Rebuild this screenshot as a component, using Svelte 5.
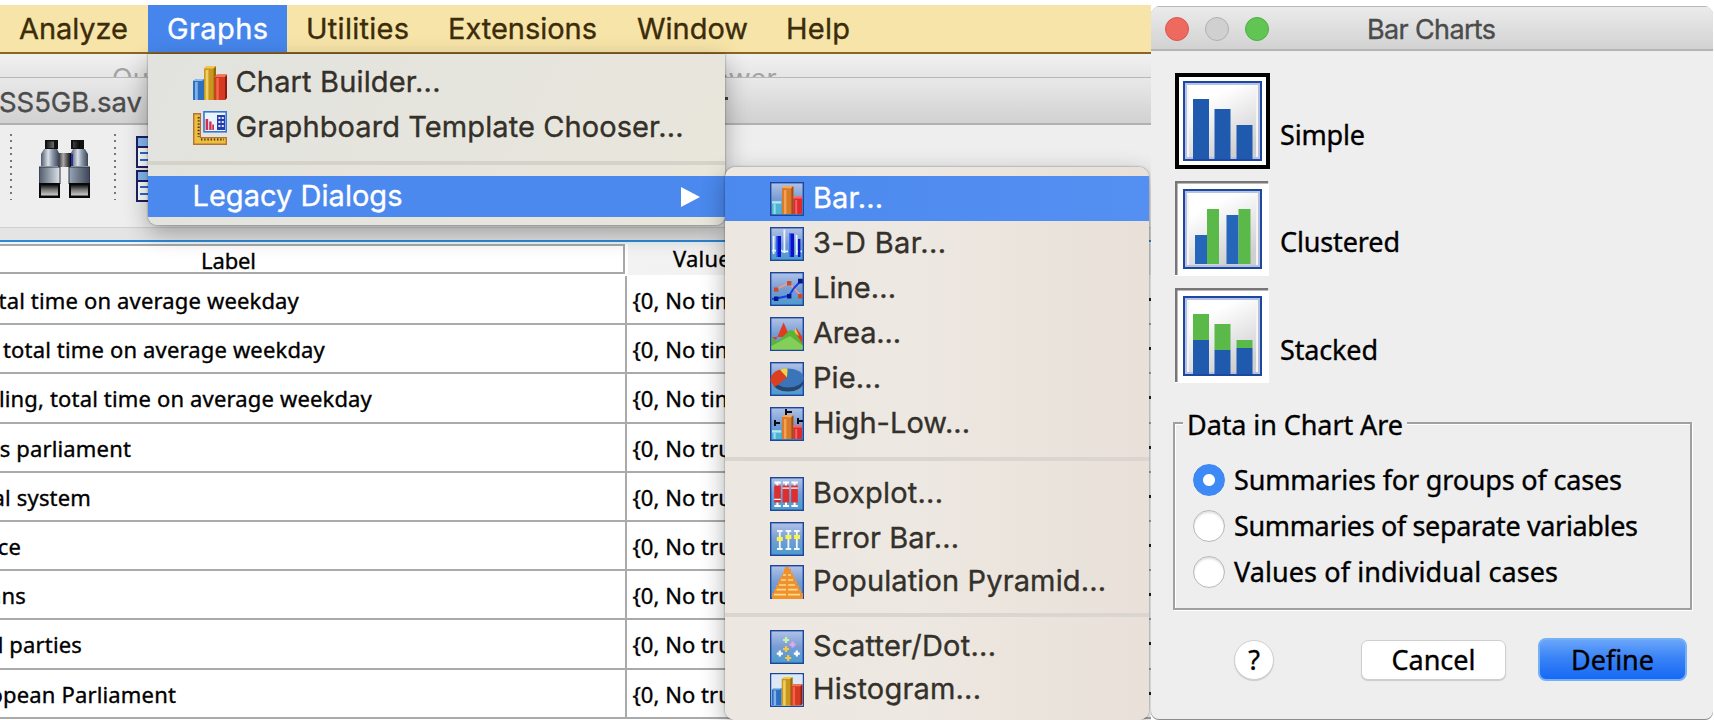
<script>
  const fit = (node, width) => {
    const natural = node.getBoundingClientRect().width;
    const gaps = node.textContent.length - 1;
    node.style.letterSpacing = `${(width - natural) / gaps}px`;
  };

  const menus = [
    { name: 'Analyze', w: 109, slot: 148 },
    { name: 'Graphs', w: 101, slot: 139, active: true },
    { name: 'Utilities', w: 103, slot: 142 },
    { name: 'Extensions', w: 149, slot: 189 },
    { name: 'Window', w: 111, slot: 149 },
    { name: 'Help', w: 64, slot: 102 },
  ];

  const groups = [
    [
      { id: 'bar', name: 'Bar...', w: 70, h: 45, on: true },
      { id: 'bar3d', name: '3-D Bar...', w: 133, h: 45 },
      { id: 'line', name: 'Line...', w: 83, h: 45 },
      { id: 'area', name: 'Area...', w: 88, h: 45 },
      { id: 'pie', name: 'Pie...', w: 68, h: 45 },
      { id: 'highlow', name: 'High-Low...', w: 157, h: 45 },
    ],
    [
      { id: 'box', name: 'Boxplot...', w: 130, h: 45 },
      { id: 'error', name: 'Error Bar...', w: 146, h: 45 },
      { id: 'pyramid', name: 'Population Pyramid...', w: 293, h: 42 },
    ],
    [
      { id: 'scatter', name: 'Scatter/Dot...', w: 183, h: 42 },
      { id: 'hist', name: 'Histogram...', w: 168, h: 43 },
    ],
  ];

  const rows = [
    { text: 'tal time on average weekday', end: 299, value: '{0, No tim' },
    { text: 'total time on average weekday', end: 325, value: '{0, No tim' },
    { text: 'ling, total time on average weekday', end: 372, value: '{0, No tim' },
    { text: "'s parliament", end: 131, value: '{0, No tru' },
    { text: 'al system', end: 91, value: '{0, No tru' },
    { text: 'ce', end: 21, value: '{0, No tru' },
    { text: 'ans', end: 26, value: '{0, No tru' },
    { text: 'l parties', end: 82, value: '{0, No tru' },
    { text: 'opean Parliament', end: 176, value: '{0, No tru' },
  ];

  const B = '#1f5aae';
  const G = '#5ab948';
  const charts = [
    { name: 'Simple', w: 85, bars: [[18, 26, 16, 60, B], [39.5, 36, 16, 50, B], [61.5, 52, 16, 34, B]] },
    { name: 'Clustered', w: 120, bars: [[20, 54, 12, 29, '#2565ba'], [32, 28, 12, 55, G], [51.5, 34, 12, 49, '#2565ba'], [63.5, 28, 12, 55, G]] },
    { name: 'Stacked', w: 98, bars: [[18, 26, 16, 26, G], [18, 52, 16, 34, B], [39.5, 36, 16, 26, G], [39.5, 62, 16, 24, B], [61.5, 52, 16, 8, G], [61.5, 60, 16, 26, B]] },
  ];

  const options = [
    { name: 'Summaries for groups of cases', w: 388 },
    { name: 'Summaries of separate variables', w: 404 },
    { name: 'Values of individual cases', w: 324 },
  ];

  let chart = $state(0);
  let option = $state(0);
</script>

{#snippet bars3d(y)}
  <path d="M1 {y + 8}h4.600v{8 - y}H1z" fill="#4fb4d4" /><path d="M1 {y + 7.600}h4.600v1.200H1z" fill="#b4e8f2" /><path d="M1.800 {y + 9}h1v{7 - y}h-1z" fill="#9bdcec" />
  <path d="M6 {y + 1}h5.600V16H6z" fill="#d9792a" /><path d="M6 {y + 1}l1-1h5l-.6 1.200z" fill="#f3a95a" /><path d="M7 {y + 2}h1.200V16H7z" fill="#f2a350" /><path d="M10.700 {y + 1}l1-1V16h-1z" fill="#a04e12" />
  <path d="M11.700 {y + 6}H16V16h-4.300z" fill="#dc2a2e" /><path d="M11.700 {y + 5}H16v1.300h-4.300z" fill="#f4696a" /><path d="M12.600 {y + 7}h1V16h-1z" fill="#f36363" />
{/snippet}

{#snippet goldBars()}
  <path d="M0 7.500 1.500 6.500h4V17H0z" fill="#2f6fbf" /><path d="M1 8h1.400v9H1z" fill="#7fb2e8" /><path d="M0 7.500 1.500 6.500h4l-1 1z" fill="#8fbdeb" />
  <path d="M5.500 1.200 7 0h4.500v17h-6z" fill="#c9971f" /><path d="M5.500 1.200 7 0h4.500l-1.200 1.200z" fill="#f0c94c" /><path d="M6.300 2h1.400v15H6.300z" fill="#f0cf62" /><path d="M10.300 1.200 11.500.3V17h-1.200z" fill="#93690b" />
  <path d="M10.800 5.500 12 4.300h5V16l-1 1h-5.200z" fill="#d63a22" /><path d="M10.800 5.500 12 4.300h5l-1 1.200z" fill="#f37558" /><path d="M11.600 6h1.300v11h-1.300z" fill="#f26747" /><path d="M16 5.500 17 4.500V16l-1 1z" fill="#8d1b12" />
{/snippet}

{#snippet icon(id)}
  <svg class="icon" viewBox="0 0 17 17">
    <defs>
      <linearGradient id="sky" x1="0" y1="0" x2="0" y2="1">
        <stop offset="0" stop-color="#b1c3e7" /><stop offset=".5" stop-color="#779dd3" /><stop offset="1" stop-color="#4a9bce" />
      </linearGradient>
    </defs>
    {#if id === 'builder'}
      {@render goldBars()}
    {:else if id === 'board'}
      <path d="M0 1h4v12h13v4H0z" fill="#b5713a" /><path d="M.7 1.800h2.700v11.800h12.900v2.600H.7z" fill="#edbf3f" />
      <path d="M2.800 3v10M4 14.300h11.500" stroke="#4b3510" stroke-width="1" stroke-dasharray=".7 .9" />
      <rect x="5.500" y=".4" width="11.100" height="10" fill="#eaf4ff" stroke="#3577cf" stroke-width=".8" />
      <path d="M6.300 4h1.300v5.500H6.300zM8.100 5.300h1.200v4.200H8.100zM9.600 6.800h.9v2.700h-.9z" fill="#cc3151" />
      <path d="M12 2h4v7.500h-4z" fill="#263cae" /><path d="M12.700 3h1v1h-1zm1.700 0h1v1h-1zm-1.700 2h1v1h-1zm1.700 0h1v1h-1zm-1.700 2h1v1h-1zm1.700 0h1v1h-1z" fill="#dce8ff" />
    {:else}
      <rect x=".35" y=".35" width="16.300" height="16.300" fill="url(#sky)" stroke="#1d459c" stroke-width=".7" />
      {#if id === 'bar'}
        {@render bars3d(2)}
      {:else if id === 'bar3d'}
        <path d="M1.800 4.500v9M7.200 1.300V13M13.300 4v10M1 11.800h5M6 12.200h3M13 12.200h3" stroke="#eaf3ff" stroke-width=".9" />
        <path d="M3 4.500h2.500V15H3zM9.500 3.200H12V15H9.500zM14 6h1.200v9H14z" fill="#0a12c8" /><path d="M3 4.500h.8V15H3zM9.500 3.200h.8V15h-.8z" fill="#3968f4" />
      {:else if id === 'line'}
        <path d="m3 8.700 6.500-3.200 6 6.500" stroke="#ef9a8b" stroke-width=".9" fill="none" /><path d="m1 13.500 2-.3 6.500-1.300L12 8l3.500-3.700" stroke="#173de4" stroke-width="1" fill="none" />
        <path d="M2 7.700h2.200v2.200H2zM8.500 4.500h2.200v2.200H8.500zM14 11h2.300v2.200H14z" fill="#c94c30" /><path d="M2 12.300h2.200v2.200H2zM8.500 11h2.200v2.200H8.500zM14 3.400h2.400v2.400H14z" fill="#07168b" />
      {:else if id === 'area'}
        <path d="m1 10 2 1.500L6.800 2.700 10 10H3z" fill="#df3d21" /><path d="m12.200 9 1-3.500 3 4.500v4.500z" fill="#df3d21" /><path d="m12 8 .8-2.500 1.700 4z" fill="#f2c348" />
        <path d="m.7 10 2.600 2.400 2-1.400L10 6.500l2 .5 4.300 6.500v2.800H.7z" fill="#5ab536" /><path d="m.7 14.500 9.300-5 6.300 4.700v2.100H.7z" fill="#84cf5a" />
      {:else if id === 'pie'}
        <ellipse cx="9" cy="10.200" rx="7.600" ry="4.600" fill="#27456f" /><ellipse cx="9.200" cy="8" rx="7.600" ry="4.800" fill="#3b74b8" />
        <path d="M8.500 7.800 5 3.700C2 4.500 0 7 .2 9.500l2.300 3z" fill="#dc3e20" /><path d="M8.500 7.800 5 3.900q2-.8 3.800-.7z" fill="#f4d242" />
      {:else if id === 'highlow'}
        {@render bars3d(4)}
        <path d="M2.500 6.500v3m0-1.500H5M8 1v3m0-1.500h3M14 5.500v3m0-1.500h2.500" stroke="#0b0b14" stroke-width="1" />
      {:else if id === 'box'}
        <path d="M3.700 2.500v12.300M8 2.500v12.300M12.300 2.500v12.300M2.200 2.700h3.200M6.500 2.700h3M10.700 2.700h3.200M2.200 14.500h3.200M6.500 14.500h3M10.700 14.500h3.200" stroke="#fff" stroke-width="1" />
        <path d="M2.100 4.200h3.300v8.600H2.100zM6.300 4.200h3.300v8.600H6.300zM10.600 4.200h3.300v8.600h-3.300z" fill="#dd2f31" /><path d="M2.100 11.200h3.300M6.300 5.600h3.300M10.600 5.600h3.300" stroke="#fff" stroke-width=".6" />
      {:else if id === 'error'}
        <path d="M4.900 4.500v9M9.200 4.500v9M13.400 4.500v9M3.500 4.500h2.800M7.800 4.500h2.800M12 4.500h2.800M3.500 13.500h2.800M7.800 13.500h2.800M12 13.500h2.800" stroke="#f2f7ff" stroke-width=".9" />
        <path d="M3.400 7.500h3v2h-3zM7.700 6.500h3v2h-3zM12 6.500h3v2h-3z" fill="#f8f34a" />
      {:else if id === 'pyramid'}
        <path d="M7.500 1h2v1h1v2h1v2h1v2h1v2h1v2h1v2h1v3H1v-3h1v-2h1v-2h1V8h1V6h1V4h1V2h.5z" fill="#ef922d" />
        <path d="M6.500 5H8m1 0h1.500M5.500 7.500H8m1 0h2.500M4.500 10H8m1 0h3.500M3.300 12.300H8m1 0h4.800M2 14.800h6m1 0h6" stroke="#ffd98c" stroke-width=".8" />
      {:else if id === 'scatter'}
        <g stroke-width="1.100"><path d="M8 3.500v3M6.500 5h3" stroke="#c9f5a0" /><path d="M11.300 5.800v3M9.800 7.300h3" stroke="#e9a6ec" /><path d="M8 8v3M6.500 9.500h3M9.100 12.500v3M7.600 14h3" stroke="#fac645" /><path d="M4.900 10.300v3M3.400 11.800h3M13.400 10.300v3M11.900 11.800h3" stroke="#fff" /></g>
      {:else}
        <rect x=".7" y=".7" width="15.600" height="15.600" fill="#dce8f6" /><g transform="translate(.9 2) scale(.9 .84)">{@render goldBars()}</g>
      {/if}
    {/if}
  </svg>
{/snippet}

<div class="screen">
  <div class="desktop">
    <nav class="menubar">
      {#each menus as m}
        <div class="menu" class:active={m.active} style:width="{m.slot}px"><span use:fit={m.w}>{m.name}</span></div>
      {/each}
    </nav>

    <div class="back-title"><span class="ou">Ou</span><span class="ewer">ewer</span></div>
    <div class="title"><span use:fit={143}>SS5GB.sav</span><i></i></div>
    <div class="toolbar">
      <i class="dots"></i>
      <svg class="bino" viewBox="0 0 51 58">
        <defs>
          <linearGradient id="steel"><stop offset="0" stop-color="#4f5b6b" /><stop offset=".4" stop-color="#d9e1e9" /><stop offset=".65" stop-color="#8996a8" /><stop offset="1" stop-color="#3b4453" /></linearGradient>
          <linearGradient id="cap"><stop offset="0" stop-color="#222" /><stop offset=".4" stop-color="#aaa" /><stop offset="1" stop-color="#050505" /></linearGradient>
          <linearGradient id="foot" x1="0" y1="0" x2="0" y2="1"><stop offset="0" stop-color="#111" /><stop offset=".45" stop-color="#777" /><stop offset="1" stop-color="#ccc" /></linearGradient>
        </defs>
        <path d="M19 13h13v14H19z" fill="url(#cap)" />
        <path d="M6 0h13v9H6zM32 0h13v9H32z" fill="#111" /><path d="M8 1.500h7V8H8zM34 1.500h7V8h-7z" fill="url(#cap)" />
        <path d="M5 9h13l2 4v13H2V14z" fill="url(#steel)" /><path d="M34 9h12l3 5v12H32V13z" fill="url(#steel)" />
        <path d="M0 27h21v17H0zM30 27h21v17H30z" fill="url(#steel)" stroke="#2c3340" />
        <path d="M32 14h2v12h-2z" fill="#2a2fa0" />
        <path d="M0 43h21v15H0zM30 43h21v15H30z" fill="#080808" /><path d="M2 45h17v10.500H2zM32 45h17v10.500H32z" fill="url(#foot)" />
      </svg>
      <i class="dots"></i>
      <svg class="list" viewBox="0 0 24 66">
        <g stroke="#1d2161" stroke-width="2"><path d="M1 1h22v30H1zM1 35h22v30H1z" fill="#fff" /><path d="M1 1h22v10H1zM1 35h22v10H1z" fill="#86baf3" /></g>
        <path d="M4 17h20M4 24h20M4 51h20M4 58h20" stroke="#2b6bd0" stroke-width="2" />
      </svg>
    </div>
    <div class="strip"></div>

    <div class="head"><div class="label"><span use:fit={55}>Label</span></div><div class="value">Value</div></div>
    <div class="rows">
      {#each rows as r}
        <div class="row">
          <div class="label"><span style:width="{r.end}px">{r.text}</span></div>
          <div class="value">{r.value}</div>
          <i></i>
        </div>
      {/each}
    </div>

    <div class="panel graphs">
      <div class="item"><span class="pic">{@render icon('builder')}</span><span class="name" use:fit={205}>Chart Builder...</span></div>
      <div class="item"><span class="pic">{@render icon('board')}</span><span class="name" use:fit={448}>Graphboard Template Chooser...</span></div>
      <hr />
      <div class="item on legacy"><span class="name" use:fit={210}>Legacy Dialogs</span><svg viewBox="0 0 19 20"><path d="M0 0v20l19-10z" fill="#fff" /></svg></div>
    </div>

    <div class="panel sub">
      {#each groups as g, i}
        {#if i}<hr />{/if}
        {#each g as it}
          <div class="item" class:on={it.on} style:height="{it.h}px"><span class="pic">{@render icon(it.id)}</span><span class="name" use:fit={it.w}>{it.name}</span></div>
        {/each}
      {/each}
    </div>
  </div>

  <section class="dialog">
    <header><b class="red"></b><b></b><b class="green"></b><span use:fit={129}>Bar Charts</span></header>
    <div class="charts">
      {#each charts as c, i}
        <button class="chart" onclick={() => (chart = i)}>
          <svg viewBox="0 0 95 96">
            <defs><linearGradient id="paper" x1="0" y1="0" x2=".5" y2="1"><stop offset=".3" stop-color="#fff" /><stop offset="1" stop-color="#cfcfd2" /></linearGradient></defs>
            {#if chart === i}
              <path d="M0 0h95v96H0z" /><path d="M4 4h87v88H4z" fill="#fff" />
            {:else}
              <path d="M0 0h94v95H0z" fill="#fff" /><path d="M1.250 94V1.250h92" fill="none" stroke="#777" stroke-width="2.500" />
            {/if}
            <path d="M9 9h77v78H9z" fill="url(#paper)" stroke="#1d48a2" stroke-width="2" />
            <path d="M11 11h73v74H11z" fill="none" stroke="#b5c2e2" stroke-width="2" /><path d="M13 14v70M82 14v70" stroke="#f8f4f0" stroke-width="2" />
            {#each c.bars as [x, y, w, h, fill]}<rect {x} {y} width={w} height={h} {fill} />{/each}
          </svg>
          <span use:fit={c.w}>{c.name}</span>
        </button>
      {/each}
    </div>
    <div class="group">
      <div class="legend"><span use:fit={216}>Data in Chart Are</span></div>
      {#each options as o, i}
        <button class="option" onclick={() => (option = i)}><i class:picked={option === i}></i><span use:fit={o.w}>{o.name}</span></button>
      {/each}
    </div>
    <footer>
      <button class="help">?</button>
      <button class="cancel"><span use:fit={84}>Cancel</span></button>
      <button class="define"><span use:fit={83}>Define</span></button>
    </footer>
  </section>
</div>

<style>
  :global(body) { background: #fff; overflow: hidden; }
  * { box-sizing: border-box; }
  button { border: 0; padding: 0; background: none; font: inherit; color: inherit; }
  span { white-space: pre; }
  svg { display: block; flex: none; }
  .screen { display: flex; width: 1714px; height: 720px; padding-top: 5px; overflow: hidden; background: #fff; font-family: Inter, "Liberation Sans", sans-serif; -webkit-text-stroke: .35px currentColor; }
  .desktop { position: relative; width: 1151px; height: 715px; display: flex; flex-direction: column; overflow: hidden; flex: none; }

  .menubar { display: flex; height: 49px; flex: none; background: #f6e4a8; border-bottom: 2px solid #8b6524; font-size: 29px; line-height: 47px; color: #3c2c0a; }
  .menu { padding-left: 19px; flex: none; }
  .menu.active { background: #4686ec; color: #fff; }

  .back-title { display: flex; height: 23px; flex: none; background: linear-gradient(#f1f1f1, #e5e5e5); overflow: hidden; color: #a3a3a3; font-size: 27px; line-height: 33px; padding: 8px 0 0 112px; -webkit-text-stroke: 0; }
  .ou { width: 35px; }
  .ewer { margin-left: 566px; letter-spacing: .3px; }
  .title { display: flex; align-items: center; height: 48px; flex: none; background: linear-gradient(#e9e9e9, #d1d1d1); border-top: 1px solid #b8b8b8; border-bottom: 2px solid #b1b1b1; color: #4c4c4c; font-size: 27.500px; line-height: 45px; }
  .title span { padding-top: 3px; margin-left: -1px; }
  .title i { width: 6px; height: 3px; background: #444; margin: -4px 0 0 580px; }
  .toolbar { display: flex; align-items: flex-start; height: 103px; flex: none; background: #eee; border-bottom: 1px solid #cfcfcf; padding: 9px 0 0 10px; }
  .dots { width: 2px; height: 66px; background: repeating-linear-gradient(#777 0 2px, transparent 2px 6.500px); }
  .bino { width: 51px; height: 58px; margin: 6px 24px 0 27px; }
  .list { width: 24px; height: 66px; margin: 2px 0 0 20px; }
  .strip { height: 16px; flex: none; background: linear-gradient(#e4e4e4 12.500px, #2f8ad6 12.500px 14.500px, #eef4f8 14.500px); }

  .head, .rows { font-family: "Noto Sans", "Open Sans", sans-serif; font-size: 22px; color: #000; }
  .head { display: flex; height: 32px; flex: none; background: #fff; }
  .head .label { width: 625px; height: 30px; border: 2px solid #a8a8a8; border-left: 0; padding-left: 201px; line-height: 28px; }
  .head .value { flex: 1; height: 31px; margin-left: 3px; background: linear-gradient(90deg, #f3f3f3, #ececec); line-height: 28px; padding-left: 45px; letter-spacing: .2px; }
  .rows { background: #fff; }
  .row { display: flex; height: 49.200px; border-bottom: 2px solid #aaa; line-height: 49px; }
  .row .label { width: 628px; border-right: 2px solid #aaa; overflow: hidden; letter-spacing: .16px; }
  .row .label span { display: flex; justify-content: flex-end; }
  .row .value { width: 521px; padding-left: 5px; letter-spacing: .05px; }
  .row i { align-self: center; width: 3px; height: 3px; background: #222; }

  .panel { position: absolute; font-size: 29px; color: #34302a; box-shadow: 0 8px 24px rgba(0, 0, 0, .32), 0 0 2px rgba(0, 0, 0, .5); overflow: hidden; }
  .panel hr { border: 0; margin: 0; height: 4px; background: #dad5cf; flex: none; }
  .item { display: flex; align-items: center; line-height: 42px; }
  .item.on { background: linear-gradient(90deg, #4c89ee, #5490f2); color: #fff; }
  .name { padding-bottom: 2px; }
  .icon { width: 34px; height: 34px; }
  .pic { width: 43px; flex: none; }
  .graphs { left: 148px; top: 49px; width: 577px; height: 171px; border-radius: 0 0 9px 9px; background: linear-gradient(120deg, #e2e3df, #e9e6db); padding-top: 6px; z-index: 1; }
  .graphs .item { height: 45px; padding-left: 44.500px; }
  .graphs hr { margin: 11px 0 11px; background: #d5d2c9; }
  .graphs .legacy { height: 41px; line-height: 39px; background: #4b89ee; }
  .legacy svg { width: 19px; height: 20px; margin-left: 278px; }
  .sub { left: 725px; top: 162px; width: 424px; height: 553px; border-radius: 10px; background: linear-gradient(90deg, #ece7e1, #ede8e1 45%, #e8e0d9); padding-top: 9px; z-index: 2; }
  .sub .item { padding-left: 45px; }
  .sub hr { margin: 11px 0 10px; }
  .sub hr:nth-of-type(2) { margin: 10px 0 9px; }

  .dialog { position: relative; z-index: 3; width: 562px; height: 714px; margin-top: 1px; border-radius: 9px 9px 8px 8px; background: #eee; display: flex; flex-direction: column; box-shadow: inset 0 1px #b9b9b9, inset 0 -1px #8c8c8c; overflow: hidden; font-family: "Noto Sans", "Open Sans", sans-serif; font-size: 27px; color: #000; }
  header { display: flex; align-items: center; height: 45px; flex: none; padding-left: 14px; gap: 16px; background: linear-gradient(#ebebeb, #d2d2d2); border-top: 1px solid #b9b9b9; border-bottom: 2px solid #b5b5b5; font: 27px/42px Inter, sans-serif; color: #4b4b4b; }
  header b { width: 24px; height: 24px; border-radius: 50%; background: #d0d0d0; border: 1px solid #b0b0b0; margin-top: 2px; }
  header .red { background: #ee6a5f; border-color: #d9574d; }
  header .green { background: #61c554; border-color: #4fae43; }
  header span { margin-left: 82px; margin-top: 3px; }
  .charts { display: flex; flex-direction: column; gap: 11.500px; padding: 22px 0 0 24px; }
  .chart { display: flex; align-items: center; height: 96px; text-align: left; }
  .chart svg { width: 95px; height: 96px; }
  .chart span { margin: 26px 0 0 10px; line-height: 37px; }
  .group { position: relative; width: 519px; height: 188px; margin: 38px 0 0 22px; border: 2px solid #a0a0a0; box-shadow: inset 1px 1px #fff, 1px 1px #fff; padding-top: 33px; display: flex; flex-direction: column; }
  .legend { position: absolute; left: 8px; top: -18px; height: 38px; line-height: 38px; width: 224px; padding-left: 4px; background: #eee; }
  .option { display: flex; align-items: center; height: 46px; padding-left: 18px; text-align: left; }
  .option span { margin-top: -1px; }
  .option i { width: 32px; height: 32px; border-radius: 50%; background: #fff; border: 1px solid #b8b8b8; box-shadow: inset 0 2px 2px rgba(0, 0, 0, .12); margin-right: 9px; }
  .option i.picked { background: radial-gradient(circle, #fff 5.500px, #3d8af7 6.500px); border-color: #3d86f4; box-shadow: none; }
  footer { display: flex; align-items: center; padding: 28px 0 0 83px; line-height: 38px; }
  .help { width: 40px; height: 40px; border-radius: 50%; background: #fff; border: 1px solid #d0d0d0; box-shadow: 0 1px 1px rgba(0, 0, 0, .15); line-height: 38px; }
  .cancel { width: 145px; height: 40px; margin-left: 87px; border-radius: 7px; background: #fff; border: 1px solid #cfcfcf; box-shadow: 0 1px 1px rgba(0, 0, 0, .15); }
  .define { width: 149px; height: 43px; margin-left: 32px; border-radius: 8px; background: linear-gradient(#6aa5fa, #3a84f6 45%, #1768f5); border: 2px solid #74b0f5; }
</style>
